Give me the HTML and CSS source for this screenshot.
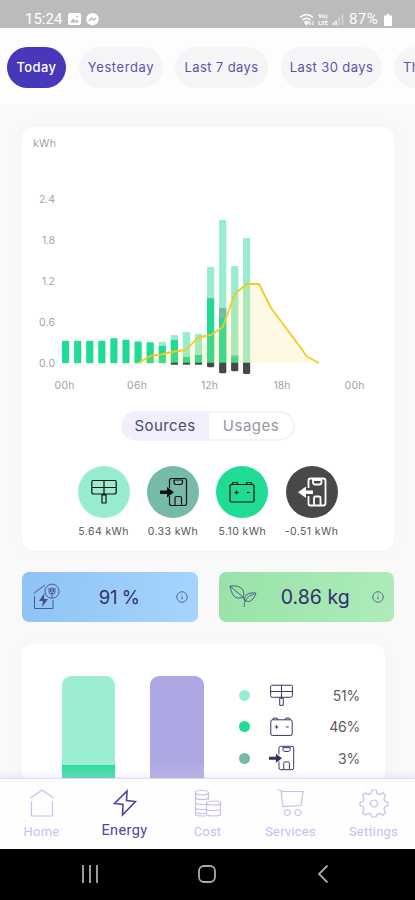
FILE: index.html
```html
<!DOCTYPE html>
<html lang="en">
<head>
    <meta charset="UTF-8">
    <meta name="viewport" content="width=device-width, initial-scale=1.0">
    <title>Energy</title>
    <link rel="stylesheet" href="styles.css">
</head>
<body>
    <svg class="sprite">
        <symbol id="panel" viewBox="0 0 28 28">
            <path d="M3 2.500h22q1.200 0 1.200 1.500v10q0 2-2 2H3.800q-2 0-2-2V4q0-1.500 1.200-1.500zM2 9.500h24M14 2.500V17M12 17h4v8h-4z"/>
        </symbol>
        <symbol id="battery" viewBox="0 0 28 28">
            <path d="M4 6.500h20q2 0 2 2v14q0 1.500-1.500 1.500h-21Q2 24 2 22.500v-14q0-2 2-2zM4 6.500l1-2h4l1 2M18 6.500l1-2h4l1 2M6.500 14.500h4M8.500 12.500v4M19 14.500h3"/>
        </symbol>
        <symbol id="meter" viewBox="0 0 30 30">
            <path d="M11.500 11V3.500q0-2 2-2h13q2 0 2 2V26q0 2.500-2 2.500h-13q-2 0-2-2V19M16 3h8.500v2q0 2.500-2 2.500h-4.500q-2 0-2-2.500zM17 28v-7q0-1.500 1.500-1.500h3.500q1.500 0 1.500 1.500v7"/>
        </symbol>
        <symbol id="info" viewBox="0 0 12 12">
            <path d="M6 .8a5.200 5.200 0 1 0 .01 0zM6 5.500v3M6 3.500v.8"/>
        </symbol>
    </svg>

    <header class="status">
        <span class="time">15:24</span>
        <svg class="st-photo" width="13" height="12" viewBox="0 0 13 12"><rect width="13" height="12" rx="2" fill="#fff"/><path d="M2 9.500l3-4 2.500 2.500L9 6.500l2 3z" fill="#bbb"/><circle cx="9" cy="3.500" r="1" fill="#bbb"/></svg>
        <svg class="st-chat" width="13" height="13" viewBox="0 0 13 13"><circle cx="6.500" cy="6.200" r="6.200" fill="#fff"/><path d="M3 8l2.500-3L7.500 7 10 5" fill="none" stroke="#bbb" stroke-width="1.300"/></svg>
        <svg class="st-wifi" width="16" height="13" viewBox="0 0 16 13"><path d="M1 4.500q6.500-6 13 0M3.500 7q4-3.500 8 0M5.500 9.300q2-1.500 4 0" fill="none" stroke="#fff" stroke-width="1.500"/><path d="M7.500 12l-2-2h4zM11 12V8M14 8v4" stroke="#fff" fill="#fff"/></svg>
        <span class="lte"><span>Vo)</span><span>LTE</span></span>
        <svg class="st-signal" width="12" height="12" viewBox="0 0 12 12"><path d="M1.500 12V9.500M4 12V7.500" stroke="#fff" stroke-width="1.500"/><path d="M7 12V4M10.500 12V1" stroke="#d6d6d6" stroke-width="1.500"/></svg>
        <span class="percent">87%</span>
        <svg width="8" height="13" viewBox="0 0 8 13"><path d="M2.500 1h3v1.500H8V13H0V2.500h2.500z" fill="#fff"/></svg>
    </header>

    <nav class="tabs">
        <button class="tab today">Today</button>
        <button class="tab yesterday">Yesterday</button>
        <button class="tab week">Last 7 days</button>
        <button class="tab month">Last 30 days</button>
        <button class="tab more">This month</button>
    </nav>

    <main class="content">
        <section class="card chart-card">
            <svg class="chart" width="372" height="275" viewBox="22 127 372 275">
                <g class="axis">
                    <text x="33" y="146.500" textLength="23">kWh</text>
                    <text x="39" y="203" textLength="16">2.4</text>
                    <text x="42" y="244" textLength="13">1.8</text>
                    <text x="42" y="284.500" textLength="13">1.2</text>
                    <text x="39" y="325.500" textLength="16">0.6</text>
                    <text x="39" y="366.500" textLength="16">0.0</text>
                    <text x="54.500" y="389" textLength="20">00h</text>
                    <text x="127" y="389" textLength="20">06h</text>
                    <text x="201" y="389" textLength="17">12h</text>
                    <text x="273.500" y="389" textLength="17">18h</text>
                    <text x="344.500" y="389" textLength="20">00h</text>
                </g>
                <g class="solar">
                    <rect x="158.700" y="341.700" width="7.200" height="8" rx="1"/>
                    <rect x="170.800" y="335" width="7.200" height="12" rx="1"/>
                    <rect x="182.900" y="332" width="7.200" height="31" rx="1"/>
                    <rect x="194.900" y="334" width="7.200" height="29" rx="1"/>
                    <rect x="207" y="267" width="7.200" height="96" rx="1"/>
                    <rect x="219.100" y="220" width="7.200" height="143" rx="1"/>
                    <rect x="231.100" y="266" width="7.200" height="97" rx="1"/>
                    <rect x="243" y="238" width="7.200" height="125" rx="1"/>
                </g>
                <g class="grid">
                    <rect x="207" y="298" width="7.200" height="3"/>
                    <rect x="219.100" y="308" width="7.200" height="12"/>
                    <rect x="231.100" y="355.500" width="7.200" height="3"/>
                </g>
                <g class="store">
                    <rect x="62" y="340.700" width="7.200" height="22.500" rx="1"/>
                    <rect x="74.100" y="340.700" width="7.200" height="22.500" rx="1"/>
                    <rect x="86.200" y="340.700" width="7.200" height="22.500" rx="1"/>
                    <rect x="98.200" y="340.700" width="7.200" height="22.500" rx="1"/>
                    <rect x="110.300" y="338.300" width="7.200" height="24.900" rx="1"/>
                    <rect x="122.400" y="339.700" width="7.200" height="23.500" rx="1"/>
                    <rect x="134.500" y="341.500" width="7.200" height="21.700" rx="1"/>
                    <rect x="146.600" y="342.300" width="7.200" height="20.900" rx="1"/>
                    <rect x="158.700" y="346" width="7.200" height="17.200"/>
                    <rect x="170.800" y="340" width="7.200" height="23"/>
                    <rect x="182.900" y="357" width="7.200" height="6"/>
                    <rect x="194.900" y="355" width="7.200" height="8"/>
                    <rect x="207" y="299.500" width="7.200" height="63.500"/>
                    <rect x="219.100" y="318" width="7.200" height="45"/>
                    <rect x="231.100" y="357.500" width="7.200" height="5.500"/>
                </g>
                <polygon class="area" points="138.300,363 150,356 161,354.500 174,351.500 186,350 198,337.500 210.800,335 222.700,327 235,293.500 247,284 259,284 271,308 283,324 295,340 307,356.500 319,363"/>
                <g class="export">
                    <rect x="170.800" y="362.700" width="7.200" height="2"/>
                    <rect x="182.900" y="362.700" width="7.200" height="2"/>
                    <rect x="194.900" y="362.700" width="7.200" height="2"/>
                    <path d="M207 362.700h7.200v3q0 1.500-1.500 1.500h-4.200q-1.500 0-1.500-1.500z"/>
                    <path d="M219.100 362.700h7.200v9q0 1.500-1.500 1.500h-4.200q-1.500 0-1.500-1.500z"/>
                    <path d="M231.100 362.700h7.200v7q0 1.500-1.500 1.500h-4.200q-1.500 0-1.500-1.500z"/>
                    <path d="M243 362.700h7.200v9.800q0 1.500-1.500 1.500h-4.200q-1.500 0-1.500-1.500z"/>
                </g>
                <polyline class="forecast" points="138.300,363 150,356 161,354.500 174,351.500 186,350 198,337.500 210.800,335 222.700,327 235,293.500 247,284 259,284 271,308 283,324 295,340 307,356.500 319,363"/>
            </svg>

            <div class="toggle">
                <span class="toggle-on">Sources</span>
                <span class="toggle-off">Usages</span>
            </div>

            <div class="sources">
                <div class="source">
                    <div class="disc light"><svg class="icon" width="28" height="28"><use href="#panel"/></svg></div>
                    <span>5.64 kWh</span>
                </div>
                <div class="source">
                    <div class="disc teal"><svg class="icon" width="30" height="30" viewBox="0 0 30 30"><use href="#meter"/><path class="arrow" d="M2 13.500h7V10l7 5.200L9 20.500V17H2z"/></svg></div>
                    <span>0.33 kWh</span>
                </div>
                <div class="source">
                    <div class="disc green"><svg class="icon" width="28" height="28"><use href="#battery"/></svg></div>
                    <span>5.10 kWh</span>
                </div>
                <div class="source">
                    <div class="disc dark"><svg class="icon" width="30" height="30" viewBox="0 0 30 30"><use href="#meter"/><path class="arrow" d="M16 13.500H9V9.500L1 15.200 9 21V17h7z"/></svg></div>
                    <span>-0.51 kWh</span>
                </div>
            </div>
        </section>

        <div class="tiles">
            <div class="tile blue">
                <svg class="icon tile-icon" width="28" height="30" viewBox="0 0 28 30">
                    <path d="M1.500 11.500L13 3M2.500 14v12.500H21V18M20 2.200a7 7 0 1 0 .01 0zM17 6v4q0 2 3 2t3-2V6M20 5v11M18.500 6v4M21.500 6v4"/>
                    <path class="arrow" d="M12.500 11l-5.500 8h4l-1 6 6-8h-4z"/>
                </svg>
                <span class="tile-value">91 %</span>
                <svg class="icon" width="12" height="12"><use href="#info"/></svg>
            </div>
            <div class="tile mint">
                <svg class="icon tile-icon" width="28" height="30" viewBox="0 0 28 30">
                    <path d="M1 4q10-1 13 4 2 4 0 7-6 3-10-2-2-3-3-9zM2 5l12 10M27 11q-9-1-11 4-1 2 0 4 5 2 8-2 2-3 3-6zM25 12q-10 3-10 13M14 15l2 4"/>
                </svg>
                <span class="tile-value">0.86 kg</span>
                <svg class="icon" width="12" height="12"><use href="#info"/></svg>
            </div>
        </div>

        <section class="card split-card">
            <div class="column"><div class="column-solar"></div><div class="column-store"></div></div>
            <div class="column purple"></div>
            <div class="legend">
                <div class="legend-row"><i class="dot light"></i><svg class="icon" width="25" height="25"><use href="#panel"/></svg><span>51%</span></div>
                <div class="legend-row"><i class="dot green"></i><svg class="icon" width="25" height="25"><use href="#battery"/></svg><span>46%</span></div>
                <div class="legend-row"><i class="dot teal"></i><svg class="icon" width="26" height="26" viewBox="0 0 30 30"><use href="#meter"/><path class="arrow" d="M0 13.500h8V10l7 5.200L8 20.500V17H0z"/></svg><span>3%</span></div>
            </div>
        </section>
    </main>

    <nav class="bottom">
        <a class="item">
            <svg class="icon" width="30" height="30" viewBox="0 0 30 30"><path d="M3.500 10L15 2l11.500 8M4.500 13.500V28h21V13.500"/></svg>
            <span>Home</span>
        </a>
        <a class="item active">
            <svg class="icon" width="30" height="30" viewBox="0 0 30 30"><path d="M17 3L4.500 15.500l8.500 1-.5 10.500L25.500 13.500l-9-1z"/></svg>
            <span>Energy</span>
        </a>
        <a class="item">
            <svg class="icon" width="30" height="30" viewBox="0 0 30 30"><path d="M2.500 4.500q0-2 6.500-2t6.500 2v7M2.500 4.500v22q0 1.500 6.500 1.500h4M2.500 4.500q0 2.500 6.500 2.500t6.500-2.500M2.500 9.500q0 2 6.500 2t6.500-2M2.500 14.500q0 2 6.500 2h4M2.500 19.500q0 2 6.500 2h4M2.500 24q0 1.500 6.500 1.500h4M13.500 15q0-2 7-2t7 2v11q0 2-7 2t-7-2zM13.500 15q0 2 7 2t7-2M13.500 21q0 1.500 7 1.500t7-1.500"/></svg>
            <span>Cost</span>
        </a>
        <a class="item">
            <svg class="icon" width="30" height="30" viewBox="0 0 30 30"><path d="M1 2h4l2 16.500 18-1L27 3.500H5.500M11.500 21.500a3 3 0 1 0 .01 0zM22 21.500a3 3 0 1 0 .01 0z"/></svg>
            <span>Services</span>
        </a>
        <a class="item">
            <svg class="icon" width="30" height="30" viewBox="0 0 30 30"><path d="M13 2h4l1 3.500 2.500 1L24 5l2.500 2.500-1.500 3.500 1 2.500 3 1v3l-3 1-1 2.500 1.500 3.500L24 27l-3.500-1.500-2.500 1-1 2.500h-4l-1-2.500-2.500-1L6 27l-2.500-2.500L5 21l-1-2.500-3-1v-3l3-1L5 11 3.500 7.500 6 5l3.500 1.500 2.500-1zM15 12a3.500 3.500 0 1 0 .01 0z"/></svg>
            <span>Settings</span>
        </a>
    </nav>

    <footer class="system">
        <svg width="18" height="18" viewBox="0 0 18 18"><path d="M2 0v18M9 0v18M16 0v18"/></svg>
        <svg width="18" height="18" viewBox="0 0 18 18"><rect x="1" y="1" width="16" height="16" rx="5"/></svg>
        <svg width="18" height="18" viewBox="0 0 18 18"><path d="M13.500 0.500L5 9l8.500 8.500"/></svg>
    </footer>
</body>
</html>
```
FILE: styles.css
```css
* {
    box-sizing: border-box;
}
body {
    margin: 0;
    height: 900px;
    display: flex;
    flex-direction: column;
    overflow: hidden;
    font-family: Inter, "Noto Sans", sans-serif;
    background-color: #f9f9f9;
}
.sprite {
    display: none;
}
.icon {
    fill: none;
    stroke: currentColor;
    stroke-width: 1.2;
    flex: none;
}
.arrow {
    fill: currentColor;
    stroke: none;
}

/* status bar */
.status {
    height: 28px;
    flex: none;
    display: flex;
    align-items: center;
    padding: 10px 23px 0 25px;
    background-color: #bbb;
    color: #fff;
    font-family: Roboto, sans-serif;
    font-size: 15px;
}
.time {
    width: 43px;
}
.st-chat {
    margin-left: 5px;
}
.st-wifi {
    margin-left: auto;
}
.lte {
    display: flex;
    flex-direction: column;
    margin: 0 4px 0 3px;
    font-size: 6px;
    line-height: 7px;
    font-weight: bold;
}
.percent {
    margin: 0 3px 0 5px;
    width: 32px;
    letter-spacing: 0.4px;
}

/* period tabs */
.tabs {
    height: 76px;
    flex: none;
    display: flex;
    align-items: center;
    padding: 2px 0 0 7px;
    overflow: hidden;
    background-color: #fdfdfd;
}
.tab {
    flex: none;
    height: 41px;
    padding: 0;
    border: none;
    border-radius: 21px;
    background-color: #f5f5f7;
    color: #5f53a6;
    font-family: inherit;
    font-size: 13px;
    letter-spacing: 0.4px;
    white-space: nowrap;
}
.today {
    width: 59px;
    margin-right: 13px;
    background-color: #4638b8;
    color: #fff;
    font-weight: 500;
}
.yesterday {
    width: 84px;
    margin-right: 12px;
    letter-spacing: 0.6px;
}
.week {
    width: 93px;
    margin-right: 13px;
}
.month {
    width: 101px;
    margin-right: 12px;
}
.more {
    width: 100px;
    padding-left: 9px;
    text-align: left;
}

/* scrolling content */
.content {
    flex: 1;
    min-height: 0;
    overflow: hidden;
    padding: 23px 21px 0 22px;
}
.card {
    background-color: #fff;
    border-radius: 10px;
    box-shadow: 0 0 18px rgba(0, 0, 0, 0.025);
}
.chart-card {
    height: 423px;
}
.chart {
    display: block;
}
.axis {
    font-size: 10.5px;
    fill: #a3a3a3;
}
.solar {
    fill: #99edcf;
}
.grid {
    fill: #76baa9;
}
.store {
    fill: #1fdb94;
}
.export {
    fill: #484848;
}
.area {
    fill: #f5d94a;
    fill-opacity: 0.15;
}
.forecast {
    fill: none;
    stroke: #f0cb25;
    stroke-width: 1.8;
    stroke-linejoin: round;
}
.toggle {
    width: 174px;
    height: 30px;
    margin: 9px 0 0 99px;
    display: flex;
    align-items: center;
    border: 2px solid #f3f2fc;
    border-radius: 15px;
    overflow: hidden;
    font-size: 15px;
    line-height: 28px;
    text-align: center;
}
.toggle-on {
    width: 86px;
    padding-right: 2px;
    background-color: #f0effb;
    color: #4b4a6c;
    letter-spacing: 0.4px;
}
.toggle-off {
    flex: 1;
    color: #96969f;
    letter-spacing: 0.5px;
}
.sources {
    display: flex;
    margin: 25px 0 0 47px;
}
.source {
    width: 69.3px;
    display: flex;
    flex-direction: column;
    align-items: center;
    gap: 7px;
    font-size: 10.5px;
    line-height: 14px;
    letter-spacing: 0.4px;
    white-space: nowrap;
    color: #555;
}
.disc {
    width: 52px;
    height: 52px;
    display: flex;
    align-items: center;
    justify-content: center;
    border-radius: 50%;
    color: #111;
}
.light {
    background-color: #99edcf;
}
.teal {
    background-color: #76baa9;
}
.green {
    background-color: #1fdb94;
}
.dark {
    background-color: #484848;
    color: #fff;
}
.dark .icon {
    stroke-width: 1.8;
}

/* summary tiles */
.tiles {
    display: flex;
    gap: 21px;
    margin-top: 22px;
}
.tile {
    width: 175.5px;
    height: 50px;
    display: flex;
    align-items: center;
    padding: 0 10px;
    border-radius: 7px;
    color: #32306f;
}
.tile .icon {
    stroke-width: 0.9;
    opacity: 0.8;
}
.blue {
    background: linear-gradient(100deg, #8fc3f5, #a6d4fd);
}
.mint {
    background: linear-gradient(100deg, #98e2a9, #aeecb9);
}
.tile-value {
    flex: 1;
    padding-left: 2px;
    text-align: center;
    font-size: 19.5px;
}
.blue .tile-value {
    font-size: 18.5px;
    letter-spacing: -0.4px;
    padding-left: 3px;
}

/* share of sources */
.split-card {
    width: 363px;
    height: 240px;
    margin-top: 22px;
    padding: 32px 25px 0 39.5px;
    display: flex;
}
.column {
    width: 53.5px;
    height: 180px;
    margin-right: 35px;
    border-radius: 9px 9px 0 0;
    overflow: hidden;
}
.column-solar {
    height: 89px;
    background-color: #9ceed2;
}
.column-store {
    height: 91px;
    background: linear-gradient(#2cdb9a, #70e4bd 16px);
}
.purple {
    background: linear-gradient(#aca8e3 86px, #bdb9ea 102px);
}
.legend {
    flex: 1;
    padding-top: 4px;
}
.legend-row {
    height: 31.3px;
    display: flex;
    align-items: center;
    color: #36305f;
    font-size: 14px;
}
.legend-row .icon {
    margin-left: 19px;
    stroke-width: 1.1;
}
.legend-row span {
    flex: 1;
    text-align: right;
    color: #5c5c5c;
    letter-spacing: -0.2px;
}
.dot {
    width: 11px;
    height: 11px;
    border-radius: 50%;
}

/* bottom navigation */
.bottom {
    height: 71px;
    flex: none;
    display: flex;
    border-top: 1px solid #dedbf5;
    background-color: #fefefe;
    box-shadow: 0 -2px 7px rgba(90, 75, 210, 0.12);
    position: relative;
}
.item {
    width: 83px;
    padding-top: 9px;
    flex: none;
    display: flex;
    flex-direction: column;
    align-items: center;
    gap: 6px;
    color: #c5bfee;
    font-family: Roboto, sans-serif;
    font-size: 13px;
    line-height: 16px;
    letter-spacing: 0.2px;
}
.active {
    color: #50449e;
    font-size: 14.5px;
    letter-spacing: 0.4px;
    gap: 5px;
}
.active .icon {
    stroke-width: 1.6;
}

/* android buttons */
.system {
    height: 51px;
    flex: none;
    display: flex;
    gap: 98.5px;
    padding: 16px 0 0 81px;
    background-color: #000;
}
.system svg {
    fill: none;
    stroke: #aaa;
    stroke-width: 1.8;
}
```
